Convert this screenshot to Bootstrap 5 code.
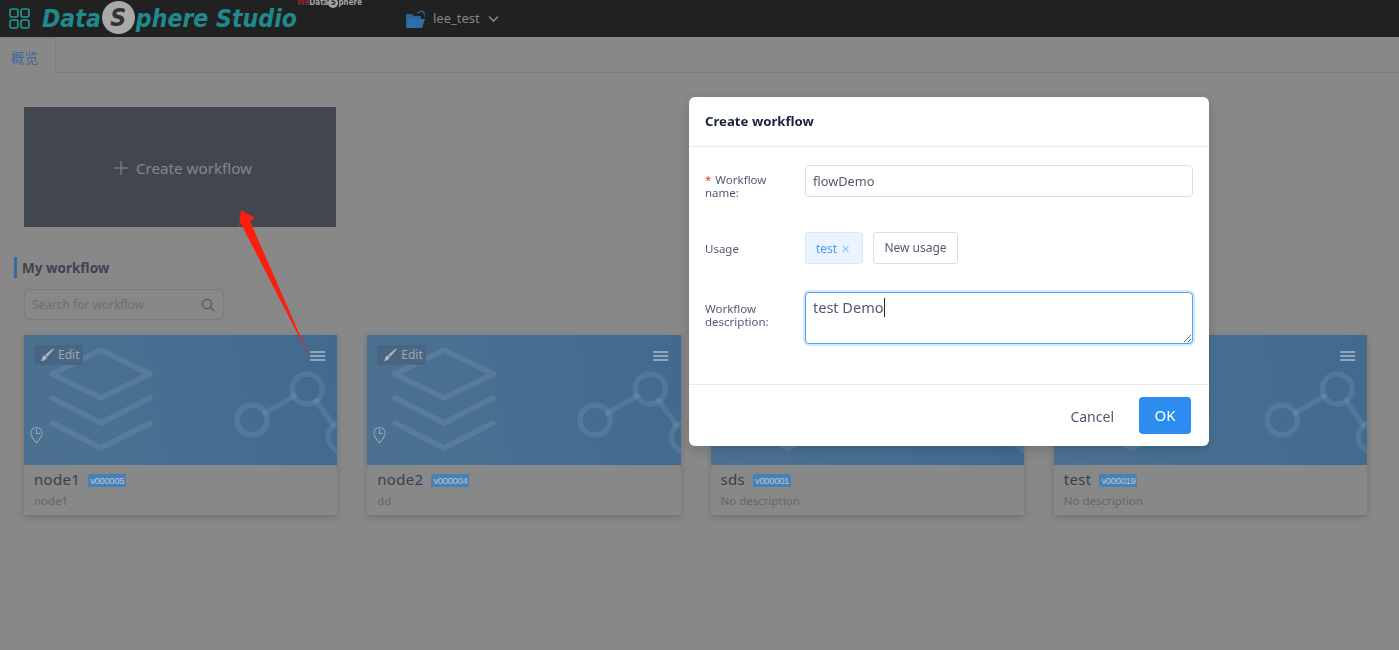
<!DOCTYPE html>
<html lang="zh">
<head>
    <meta charset="UTF-8">
    <meta name="viewport" content="width=device-width, initial-scale=1.0">
    <title>DataSphere Studio</title>
    <link href="https://cdn.jsdelivr.net/npm/bootstrap@5.3.0/dist/css/bootstrap.min.css" rel="stylesheet">
    <style>
        html, body { height: 100%; }
        body { background: #888; color: #3f434e; font-family: "Noto Sans", "Noto Sans CJK SC", sans-serif; font-size: 12px; overflow: hidden; }
        .top-bar { height: 37px; background: #212121; padding: 0 0 0 9px; flex-wrap: nowrap; justify-content: flex-start; }
        .logo-text { font-family: "DejaVu Sans Condensed", "DejaVu Sans", sans-serif; font-stretch: condensed; font-style: italic; font-weight: 700; font-size: 24.6px; line-height: 37px; color: #1f8a8c; margin-left: 12px; width: 255px; white-space: nowrap; }
        .logo-s { display: inline-block; width: 33px; height: 33px; line-height: 33px; border-radius: 50%; background: #a9a9a9; color: #333; text-align: center; vertical-align: 1px; margin: 0 1px; }
        .logo-small { align-self: flex-start; width: 63px; margin-top: -3px; font-family: "DejaVu Sans Condensed", "DejaVu Sans", sans-serif; font-stretch: condensed; font-weight: 700; font-size: 8px; color: #a5a5a5; white-space: nowrap; }
        .logo-small b { color: #8a2a33; font-style: italic; }
        .logo-small i { display: inline-block; width: 10px; height: 10px; line-height: 10px; border-radius: 50%; background: #a5a5a5; color: #333; text-align: center; font-style: normal; }
        .space-name { margin-left: 46px; color: #858585; font-size: 13px; }
        .tab-strip { height: 36px; border-bottom: 1px solid #7c7c7c; }
        .tab-strip .nav-link { height: 36px; width: 56px; padding: 11px 0 0 11px; font-size: 13.5px; line-height: 18px; color: #3c689c; background: #888; border: 0; border-right: 1px solid #7c7c7c; border-top: 1px solid #7c7c7c; border-radius: 0 3px 0 0; }
        .page-body { padding: 34px 32px 0 24px; }
        .create-box { width: 312px; height: 120px; padding: 2px 0 0 6px; background: #424650; color: #85878c; font-size: 15.2px; border-radius: 0; }
        .section-title { margin: 30px 0 11px -10px; padding-left: 5px; height: 21px; border-left: 3px solid #3c689c; font-size: 13.5px; font-weight: 700; line-height: 22px; color: #3f434e; }
        .search-box { width: 200px; height: 31px; border: 1px solid #7b7b7b; border-radius: 4px; padding: 0 8px 0 7px; margin-bottom: 15px; }
        .search-box input { background: transparent; border: 0; outline: 0; width: 100%; font-size: 12px; color: #666; padding: 0; }
        .search-box input::placeholder { color: #6d6d6d; opacity: 1; }
        .flow-grid { display: grid; grid-template-columns: repeat(4, 1fr); gap: 30px; }
        .flow-card { height: 180px; background: #888; border: 0; border-radius: 0; box-shadow: 0 2px 6px rgba(0,0,0,.18); }
        .flow-thumb { position: relative; height: 130px; overflow: hidden; background: linear-gradient(80deg, #4c7190 0%, #476e92 55%, #416a8e 100%); }
        .flow-thumb .deco { display: block; position: absolute; left: 0; top: 0; width: 100%; height: 130px; }
        .edit-chip { position: absolute; left: 10px; top: 10px; width: 49px; height: 20px; border-radius: 2px; background: #4a6581; color: #9aa9b8; line-height: 20px; padding-left: 24px; }
        .edit-brush { position: absolute; left: 6px; top: 3px; }
        .flow-info { padding: 3px 10px 0; }
        .flow-name { font-size: 15px; line-height: 22px; color: #3a3e48; margin-right: 8px; letter-spacing: .3px; }
        .flow-ver { background: #4a81b5; color: #b4c8da; font-family: "Liberation Sans", sans-serif; font-size: 9.5px; font-weight: 400; padding: 0 2px; border-radius: 1px; line-height: 13px; height: 13px; vertical-align: 1px; letter-spacing: -.35px; }
        .flow-desc { font-size: 11.5px; line-height: 18px; margin-top: 2px; color: #656565; }
        .wf-dialog { width: 520px; max-width: 520px; margin: 97px 0 0 689px; }
        .wf-dialog .modal-content { background: #fff; border: 0; border-radius: 6px; height: 349px; box-shadow: 0 4px 12px rgba(0,0,0,.15); }
        .wf-dialog .modal-header { height: 50px; padding: 0 16px; border-bottom: 1px solid #e8eaec; }
        .wf-dialog .modal-title { font-size: 13.2px; font-weight: 700; color: #17233d; }
        .wf-dialog .modal-body { padding: 18px 16px 0; flex: 1 1 auto; }
        .wf-dialog .modal-footer { height: 62px; padding: 0 18px 0 0; border-top: 1px solid #e8eaec; gap: 0; flex-wrap: nowrap; }
        .wf-row1 { margin-bottom: 35px; }
        .wf-row2 { margin-bottom: 28px; }
        .wf-label { width: 100px; flex: none; color: #515a6e; font-size: 11.5px; line-height: 13px; }
        .wf-label-name { height: 32px; padding-top: 8px; }
        .wf-label-desc { margin-bottom: 6px; }
        .wf-label em { color: #ed4014; font-style: normal; margin-right: 4px; }
        .form-control.wf-input { height: 32px; font-size: 12.8px; color: #515a6e; padding: 4px 7px; border-color: #dcdee2; border-radius: 4px; box-shadow: none; }
        .wf-area-wrap { position: relative; flex: 1 1 auto; }
        .form-control.wf-area { height: 52px; font-size: 14.5px; line-height: 20px; color: #515a6e; padding: 4px 7px; border-color: #57a3f3; border-radius: 4px; box-shadow: 0 0 0 2px rgba(45,140,240,.2); }
        .wf-caret { position: absolute; left: 79px; top: 6px; width: 1px; height: 19px; background: #222; }
        .wf-tag { height: 32px; width: 58px; background: #ebf4fe; border: 1px solid #d5e8fc; border-radius: 3px; color: #48a0f7; line-height: 32px; padding-left: 10px; margin-right: 10px; }
        .wf-tag span { color: #8cc3f8; margin-left: 4px; font-size: 11px; }
        .wf-new { height: 32px; width: 85px; padding: 0; font-size: 12px; color: #515a6e; border: 1px solid #dcdee2; border-radius: 3px; }
        .wf-dialog .modal-footer .wf-cancel { font-size: 14px; color: #515a6e; padding: 0; margin: 2px 25px 0 0; border: 0; }
        .wf-dialog .modal-footer .wf-ok { width: 52px; height: 37px; margin: 0; padding: 0; font-size: 15px; background: #2d8cf0; border: 0; border-radius: 4px; }
        .mark-arrow { position: absolute; left: 0; top: 0; z-index: 2000; pointer-events: none; }
    </style>
</head>
<body>
    <nav class="navbar top-bar">
        <svg width="21" height="21" viewBox="0 0 21 21" fill="none" stroke="#1f9a98" stroke-width="1.6">
            <rect x="1" y="1" width="8" height="8" rx="2"/><rect x="12" y="1" width="8" height="8" rx="2"/>
            <rect x="1" y="12" width="8" height="8" rx="2"/><rect x="12" y="12" width="8" height="8" rx="2"/>
        </svg>
        <div class="logo-text">Data<span class="logo-s">S</span>phere Studio</div>
        <div class="logo-small"><b>We</b>Data<i>S</i>phere</div>
        <div class="space-name d-flex align-items-center">
            <svg width="19" height="18" viewBox="0 0 19 18" class="me-2">
                <path d="M0 4h6l2 2h7v12H0z" fill="#2a6496"/>
                <path d="M3 9h16l-3 9H0z" fill="#2f6ea6"/>
                <path d="M11 3l5-2 3 3v3" fill="none" stroke="#2f6ea6" stroke-width="1.2"/>
            </svg>
            <span>lee_test</span>
            <svg class="ms-2" width="11" height="8" viewBox="0 0 11 8" fill="none" stroke="#858585" stroke-width="1.6"><path d="M1 1.500l4.500 4.500L10 1.500"/></svg>
        </div>
    </nav>

    <ul class="nav tab-strip">
        <li class="nav-item"><a class="nav-link" href="#">概览</a></li>
    </ul>

    <main class="page-body">
        <div class="create-box d-flex align-items-center justify-content-center">
            <svg width="14" height="14" viewBox="0 0 14 14" class="me-2" stroke="#85878c" stroke-width="1.1"><path d="M7 0v14M0 7h14"/></svg>
            <span>Create workflow</span>
        </div>

        <h2 class="section-title">My workflow</h2>
        <div class="search-box d-flex align-items-center">
            <input type="text" placeholder="Search for workflow">
            <svg width="14" height="14" viewBox="0 0 14 14" fill="none" stroke="#555" stroke-width="1.3" class="flex-shrink-0"><circle cx="6" cy="6" r="4.600"/><path d="M9.500 9.500L13 13"/></svg>
        </div>

        <div class="flow-grid" id="flowGrid"></div>
    </main>

    <div class="modal d-block">
        <div class="modal-dialog wf-dialog">
            <div class="modal-content">
                <div class="modal-header">
                    <h5 class="modal-title">Create workflow</h5>
                </div>
                <div class="modal-body">
                    <div class="d-flex align-items-start wf-row1">
                        <label class="wf-label wf-label-name"><em>*</em>Workflow<br>name:</label>
                        <input class="form-control wf-input" type="text" value="flowDemo">
                    </div>
                    <div class="d-flex align-items-center wf-row2">
                        <label class="wf-label">Usage</label>
                        <div class="wf-tag">test<span>✕</span></div>
                        <button type="button" class="btn wf-new">New usage</button>
                    </div>
                    <div class="d-flex align-items-center">
                        <label class="wf-label wf-label-desc">Workflow<br>description:</label>
                        <div class="wf-area-wrap">
                            <textarea class="form-control wf-area">test Demo</textarea>
                            <div class="wf-caret"></div>
                        </div>
                    </div>
                </div>
                <div class="modal-footer">
                    <button type="button" class="btn wf-cancel">Cancel</button>
                    <button type="button" class="btn btn-primary wf-ok">OK</button>
                </div>
            </div>
        </div>
    </div>

    <svg class="mark-arrow" width="340" height="360" viewBox="0 0 340 360">
        <path d="M241 210l14 8-5 3 59 135-68-132-2 3z" fill="#fb1f0e"/>
    </svg>

    <script>
        // cards of the workflow list
        const flows = [
            { name: 'node1', ver: 'v000005', desc: 'node1' },
            { name: 'node2', ver: 'v000004', desc: 'dd' },
            { name: 'sds', ver: 'v000001', desc: 'No description' },
            { name: 'test', ver: 'v000019', desc: 'No description' }
        ];
        const deco = `
            <svg class="deco" viewBox="0 0 313 130" preserveAspectRatio="none" fill="none" stroke="#fff" stroke-opacity=".085" stroke-width="5.500" stroke-linecap="round" stroke-linejoin="round">
                <path d="M28 39L77 15l49 24-49 24z"/>
                <path d="M28 63l49 25 49-25"/>
                <path d="M28 88l49 25 49-25"/>
                <circle cx="228" cy="85" r="15"/><circle cx="283" cy="54" r="15"/><circle cx="319" cy="102" r="15"/><circle cx="336" cy="18" r="9"/>
                <path d="M241 78l29-17M292 66l17 24"/>
                <g stroke-opacity=".4" stroke-width="1">
                    <path d="M12.500 108C9 104 7 101 7 98a5.500 5.500 0 1 1 11 0c0 3-2 6-5.500 10zM12.500 94.500v4h3"/>
                </g>
                <g stroke-opacity=".55" stroke-width="1.600" stroke-linecap="butt">
                    <path d="M286 17h15M286 21h15M286 25h15"/>
                </g>
            </svg>`;
        document.getElementById('flowGrid').innerHTML = flows.map(f => `
            <div class="card flow-card">
                <div class="flow-thumb">
                    ${deco}
                    <div class="edit-chip">Edit
                        <svg class="edit-brush" width="14" height="14" viewBox="0 0 14 14" fill="#a9b6c3"><path d="M13 .5l.8.8-6.500 7.500-2-2zM4.500 7.500c1.500 0 2.500 1 2 2.500-.6 1.800-2.800 3-6 3 1.500-1 1.300-2 1.800-3.300.4-1.200 1.200-2.200 2.200-2.200z"/></svg>
                    </div>
                </div>
                <div class="flow-info">
                    <div><span class="flow-name">${f.name}</span><span class="badge flow-ver">${f.ver}</span></div>
                    <div class="flow-desc">${f.desc}</div>
                </div>
            </div>`).join('');
    </script>
    <script src="https://cdn.jsdelivr.net/npm/bootstrap@5.3.0/dist/js/bootstrap.bundle.min.js"></script>
</body>
</html>
